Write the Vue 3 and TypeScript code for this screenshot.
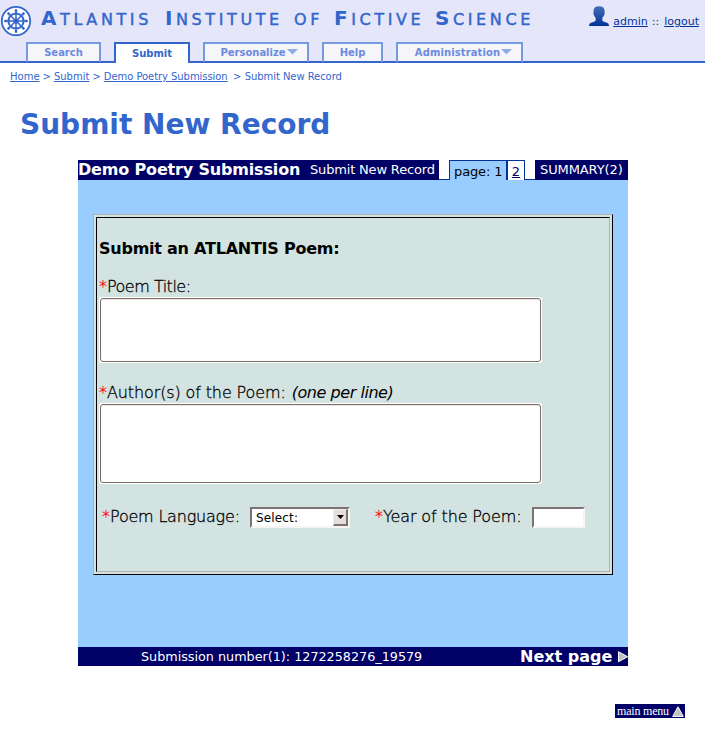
<script setup lang="ts">
interface Tab { label: string; cls: string; menu?: boolean }
const tabs: Tab[] = [
  { label: 'Search', cls: 'search' },
  { label: 'Submit', cls: 'submit on' },
  { label: 'Personalize', cls: 'personalize', menu: true },
  { label: 'Help', cls: 'help' },
  { label: 'Administration', cls: 'administration', menu: true },
]
const words: string[][] = [['A', 'TLANTIS'], ['I', 'NSTITUTE'], ['', 'OF'], ['F', 'ICTIVE'], ['S', 'CIENCE']]
const spokes = [0, 45, 90, 135]
</script>

<template>
  <div class="page">
    <header>
      <div class="brand">
        <svg class="wheel" width="32" height="32" viewBox="0 0 32 32">
          <circle cx="16" cy="16" r="14.2" fill="#fff" stroke="#36c" stroke-width="1.8" />
          <circle cx="16" cy="16" r="7.6" fill="none" stroke="#36c" stroke-width="2" />
          <g v-for="a in spokes" :key="a" :transform="`rotate(${a} 16 16)`">
            <path d="M16 4.2V27.8" stroke="#36c" stroke-width="1.5" />
            <path d="M14.8 4.5h2.4v2.4h-2.4zM14.8 25.1h2.4v2.4h-2.4z" fill="#36c" />
          </g>
          <circle cx="16" cy="16" r="2.6" fill="#36c" />
        </svg>
        <div class="name"><span v-for="w in words" :key="w[1]" class="word" :class="'w-' + w[1].toLowerCase()"><b>{{ w[0] }}</b>{{ w[1] }}</span></div>
        <div class="user">
          <svg width="20" height="20" viewBox="0 0 20 20">
            <defs><linearGradient id="ug" x1="0" y1="0" x2="0" y2="1"><stop offset="0" stop-color="#456cb5" /><stop offset="1" stop-color="#039" /></linearGradient></defs>
            <path d="M10 .3C13.5 .3 15.5 1.8 15.5 4.5L15.7 7.5C15.3 10 13.8 11 13.3 12V14.6Q14 16 18 16.7Q20 17.3 20 20H0Q0 17.3 2 16.7Q6 16 6.7 14.6V12C6.2 11 4.7 10 4.4 7.5L4.6 4.5C4.7 1.8 6.5 .3 10 .3Z" fill="url(#ug)" />
          </svg>
          <a>admin</a><span class="sep">::</span><a>logout</a>
        </div>
      </div>
      <nav>
        <div v-for="t in tabs" :key="t.label" class="tab" :class="t.cls">
          <span>{{ t.label }}</span>
          <svg v-if="t.menu" width="11" height="6" viewBox="0 0 11 6"><path d="M0 0H11L5.5 5.5Z" fill="#8fabe6" /></svg>
        </div>
      </nav>
    </header>
    <div class="crumbs"><a class="c1">Home</a><i>&gt;</i><a class="c2">Submit</a><i>&gt;</i><a class="c3">Demo Poetry Submission</a><i class="last">&gt;</i><span class="c4">Submit New Record</span></div>
    <h1>Submit New Record</h1>
    <main>
      <div class="top">
        <div class="heading"><b>Demo Poetry Submission</b><span>Submit New Record</span></div>
        <div class="gap"></div>
        <div class="current">page: 1</div>
        <div class="other"><a>2</a></div>
        <div class="gap"></div>
        <div class="summary">SUMMARY(2)</div>
      </div>
      <div class="body">
        <form class="outer">
          <div class="inner">
            <h2>Submit an ATLANTIS Poem:</h2>
            <label class="l1"><em>*</em><span>Poem Title:</span></label>
            <div class="area a1"><div></div></div>
            <label class="l2"><em>*</em><span>Author(s) of the Poem:</span><i>(one per line)</i></label>
            <div class="area a2"><div></div></div>
            <div class="row">
              <label class="l3"><em>*</em><span>Poem Language:</span></label>
              <div class="select"><span>Select:</span><div class="btn"><svg width="7" height="4" viewBox="0 0 7 4"><path d="M0 0H7L3.5 4Z" fill="#000" /></svg></div></div>
              <label class="l4"><em>*</em><span>Year of the Poem:</span></label>
              <div class="year"></div>
            </div>
          </div>
        </form>
      </div>
      <div class="foot">
        <span class="num">Submission number(1): 1272258276_19579</span>
        <b>Next page</b>
        <svg width="10" height="12" viewBox="0 0 10 12"><path d="M.5 .7L9.6 5.7L.5 10.8Z" fill="#c0c0c0" stroke="#fff" /></svg>
      </div>
    </main>
    <a class="menu"><span>main menu</span>
      <svg width="12" height="11" viewBox="0 0 12 11"><path d="M6 .8L11.3 10.4H.7Z" fill="#c0c0c0" stroke="#fff" /></svg>
    </a>
  </div>
</template>

<style>
body { margin: 0; background: #fff; }
</style>
<style scoped>
* { box-sizing: border-box; }
.page { width: 705px; height: 738px; display: flex; flex-direction: column; font-family: "DejaVu Sans", sans-serif; white-space: nowrap; overflow: hidden; }
header { height: 63px; background: #e6e6fa; border-bottom: 2px solid #36c; flex: none; }
.brand { height: 42px; display: flex; align-items: flex-start; color: #36c; }
.wheel { margin-top: 5px; flex: none; }
.name { display: flex; width: 500px; margin-left: 9px; font-size: 16px; line-height: 36px; letter-spacing: 3.6px; -webkit-text-stroke: .45px #36c; }
.word { flex: none; }
.word b { font-size: 20px; -webkit-text-stroke: 0; }
.w-tlantis { width: 124px; }
.w-nstitute { width: 129px; }
.w-of { width: 40px; }
.w-ictive { width: 101px; }
.user { display: flex; margin-left: auto; padding-right: 6px; font-size: 11px; color: #039; }
.user svg { margin: 6px 4px 0 0; }
.user a, .user span { line-height: 44px; }
.user a { text-decoration: underline; }
.sep { margin: 0 5px 0 4px; }
nav { display: flex; gap: 13px; padding-left: 26px; }
.tab { height: 20px; border: 2px solid #759ade; border-bottom: 0; background: #f5f5fa; color: #6b8ae0; font-size: 10px; font-weight: bold; display: flex; align-items: center; justify-content: center; line-height: 18px; }
.tab:not(.on) { background: linear-gradient(#f5f5fa 17px, #36c 17px) padding-box; padding-bottom: 1px; }
.search { width: 75px; }
.submit { width: 76px; }
.personalize { width: 106px; padding-left: 6px; }
.help { width: 61px; }
.administration { width: 127px; padding-left: 8px; letter-spacing: .1px; }
.tab svg { margin: 0 0 1px 1px; }
.on { height: 21px; background: #fff; border-color: #36c; color: #36c; }
.crumbs { display: flex; height: 27px; padding-left: 10px; color: #36c; font-size: 10px; line-height: 27px; flex: none; }
.crumbs a { text-decoration: underline; }
.crumbs i { font-style: normal; width: 14.4px; text-align: center; }
.crumbs .last { width: 17px; padding-left: 2px; }
.c3, .c4 { letter-spacing: -.06px; }
h1 { margin: 18px 0 0 20px; height: 52px; font-size: 28px; line-height: 34px; color: #36c; }
main { width: 550px; margin-left: 78px; }
.top { display: flex; height: 20px; }
.heading { width: 361px; background: #006; color: #fff; display: flex; line-height: 19px; }
.heading b { width: 232px; font-size: 16px; letter-spacing: -.17px; }
.heading span { font-size: 13px; letter-spacing: -.17px; }
.gap { width: 10px; border-bottom: 1px solid #039; }
.current { width: 58px; border: 1px solid #039; border-bottom: 0; background: #9cf; font-size: 13px; line-height: 21px; padding-left: 4px; letter-spacing: -.12px; }
.other { width: 18px; border: 1px solid #039; border-bottom: 0; font-size: 13px; line-height: 21px; text-align: center; }
.other a { text-decoration: underline; color: #006; }
.summary { width: 93px; background: #006; color: #fff; font-size: 13px; line-height: 20px; padding-left: 5px; letter-spacing: -.1px; }
.body { height: 467px; background: #9cf; padding: 34px 15px; }
.outer { height: 361px; padding: 2px; background: #d3e3e1; border: 1px solid; border-color: #b3b3b3 #000 #000 #b3b3b3; }
.inner { height: 355px; border: 1px solid; border-color: #000 #b3b3b3 #b3b3b3 #000; padding-left: 2px; display: flex; flex-direction: column; }
h2 { margin: 21px 0 0; font-size: 16px; line-height: 20px; height: 38px; letter-spacing: -.24px; }
label { display: flex; font-size: 16px; line-height: 20px; font-weight: 200; height: 20px; letter-spacing: -.12px; -webkit-text-stroke: .3px; }
.l1 span { letter-spacing: -.5px; }
.l3 span { letter-spacing: -.2px; }
label em { color: red; font-style: normal; width: 8px; }
label i { margin-left: 6px; letter-spacing: -.45px; -webkit-text-stroke: 0; }
.area { width: 443px; background: #fff; padding: 1px; border-radius: 2px; flex: none; }
.area div { height: 100%; border: 1px solid #7b6b63; border-radius: 3px; box-shadow: inset 0 1px #eee8e6; }
.a1 { height: 66px; margin-bottom: 20px; }
.a2 { height: 81px; }
.row { display: flex; margin-top: 23px; padding-left: 3px; }
.l3 { width: 148px; }
.l4 { width: 157px; margin-left: 25px; }
.select, .year { height: 21px; border: 2px solid; border-color: #7b7373 #f5f5f3 #f5f5f3 #7b7373; background: #fff; }
.select { width: 100px; display: flex; justify-content: space-between; font-size: 12px; line-height: 18px; padding-left: 4px; letter-spacing: .15px; }
.year { width: 53px; }
.btn { width: 15px; height: 17px; background: #e4dfdc; border: 1px solid; border-color: #f1eeec #7b7373 #7b7373 #f1eeec; border-right-width: 2px; border-bottom-width: 2px; display: flex; align-items: center; justify-content: center; }
.foot { height: 19px; background: #006; color: #fff; display: flex; align-items: center; line-height: 19px; }
.num { width: 442px; padding-left: 63px; font-size: 12.75px; }
.foot b { width: 98px; font-size: 16px; }
.menu { margin: 38px 0 0 615px; width: 70px; height: 14px; background: #006; color: #fff; display: flex; align-items: center; justify-content: space-between; padding: 0 1px 0 2px; font: 12px/14px "Liberation Serif", serif; letter-spacing: -.2px; }
</style>
